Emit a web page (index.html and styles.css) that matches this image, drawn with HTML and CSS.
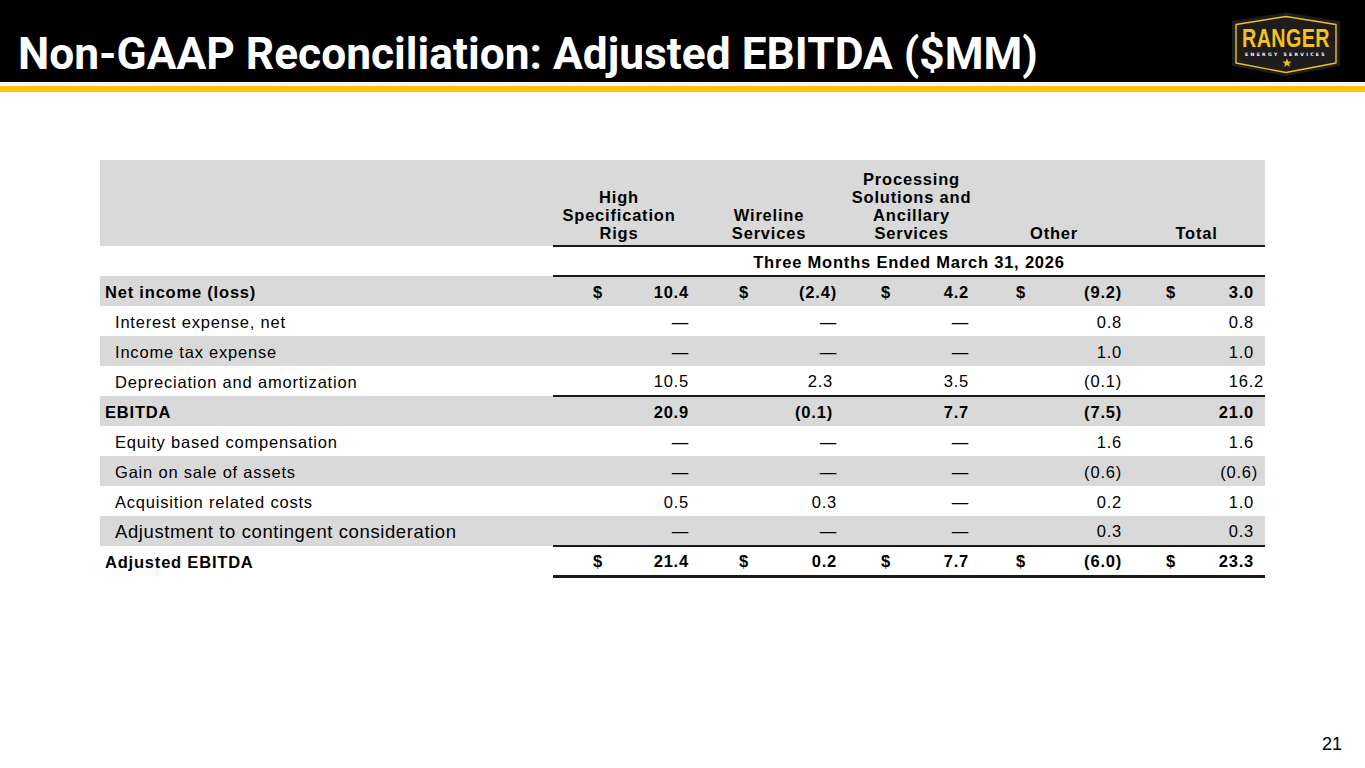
FILE: index.html
```html
<!DOCTYPE html>
<html lang="en">
<head>
<meta charset="utf-8">
<title>Non-GAAP Reconciliation</title>
<link rel="stylesheet" href="styles.css">
</head>
<body>
<div class="page">
  <header class="topbar">
    <h1 class="title">Non-GAAP Reconciliation: Adjusted EBITDA ($MM)</h1>
    <div class="logo">
      <svg width="112" height="65" viewBox="0 0 112 65" xmlns="http://www.w3.org/2000/svg">
        <path d="M3 10 L56 1.5 L109 10 L109 53 L56 63 L3 53 Z" fill="#1e1c1d" stroke="#1e1c1d" stroke-width="2" stroke-linejoin="round"/>
        <path d="M6 12.5 L56 4.5 L106 12.5 L106 51 L56 60.5 L6 51 Z" fill="none" stroke="#f2c01e" stroke-width="1.4" stroke-linejoin="round"/>
        <text x="0" y="0" text-anchor="middle" class="logo-main" transform="translate(56 35) scale(0.76 1)">RANGER</text>
        <text x="56" y="43.5" text-anchor="middle" class="logo-sub">ENERGY SERVICES</text>
        <polygon points="57,46.5 58.2,49.6 61.5,49.7 58.9,51.7 59.8,54.9 57,53 54.2,54.9 55.1,51.7 52.5,49.7 55.8,49.6" fill="#f2c01e"/>
      </svg>
    </div>
  </header>
  <div class="rule-gap"></div>
  <div class="rule"></div>

  <main class="content">
    <table class="recon">
      <colgroup>
        <col class="w-label">
        <col class="w1d"><col class="w1v">
        <col class="w2d"><col class="w2v">
        <col class="w3d"><col class="w3v">
        <col class="w4d"><col class="w4v">
        <col class="w5d"><col class="w5v">
      </colgroup>
      <thead>
        <tr class="hdr">
          <th class="lbl"></th>
          <th colspan="2" class="h h1c">High<br>Specification<br>Rigs</th>
          <th colspan="2" class="h">Wireline<br>Services</th>
          <th colspan="2" class="h">Processing<br>Solutions and<br>Ancillary<br>Services</th>
          <th colspan="2" class="h">Other</th>
          <th colspan="2" class="h">Total</th>
        </tr>
        <tr class="period">
          <th class="lbl"></th>
          <th colspan="10" class="per">Three Months Ended March 31, 2026</th>
        </tr>
      </thead>
      <tbody>
        <tr class="g bold">
          <td class="lbl">Net income (loss)</td>
          <td class="d">$</td><td class="v v1">10.4</td>
          <td class="d">$</td><td class="v v2">(2.4)</td>
          <td class="d">$</td><td class="v v3">4.2</td>
          <td class="d">$</td><td class="v v4">(9.2)</td>
          <td class="d">$</td><td class="v v5">3.0</td>
        </tr>
        <tr>
          <td class="lbl ind">Interest expense, net</td>
          <td></td><td class="v v1">—</td>
          <td></td><td class="v v2">—</td>
          <td></td><td class="v v3">—</td>
          <td></td><td class="v v4">0.8</td>
          <td></td><td class="v v5">0.8</td>
        </tr>
        <tr class="g">
          <td class="lbl ind">Income tax expense</td>
          <td></td><td class="v v1">—</td>
          <td></td><td class="v v2">—</td>
          <td></td><td class="v v3">—</td>
          <td></td><td class="v v4">1.0</td>
          <td></td><td class="v v5">1.0</td>
        </tr>
        <tr class="sub">
          <td class="lbl ind">Depreciation and amortization</td>
          <td></td><td class="v v1">10.5</td>
          <td></td><td class="v v2 nudge">2.3</td>
          <td></td><td class="v v3">3.5</td>
          <td></td><td class="v v4">(0.1)</td>
          <td></td><td class="v v5 wide">16.2</td>
        </tr>
        <tr class="g bold">
          <td class="lbl">EBITDA</td>
          <td></td><td class="v v1">20.9</td>
          <td></td><td class="v v2 nudge">(0.1)</td>
          <td></td><td class="v v3">7.7</td>
          <td></td><td class="v v4">(7.5)</td>
          <td></td><td class="v v5">21.0</td>
        </tr>
        <tr>
          <td class="lbl ind">Equity based compensation</td>
          <td></td><td class="v v1">—</td>
          <td></td><td class="v v2">—</td>
          <td></td><td class="v v3">—</td>
          <td></td><td class="v v4">1.6</td>
          <td></td><td class="v v5">1.6</td>
        </tr>
        <tr class="g">
          <td class="lbl ind">Gain on sale of assets</td>
          <td></td><td class="v v1">—</td>
          <td></td><td class="v v2">—</td>
          <td></td><td class="v v3">—</td>
          <td></td><td class="v v4">(0.6)</td>
          <td></td><td class="v v5 paren">(0.6)</td>
        </tr>
        <tr>
          <td class="lbl ind">Acquisition related costs</td>
          <td></td><td class="v v1">0.5</td>
          <td></td><td class="v v2">0.3</td>
          <td></td><td class="v v3">—</td>
          <td></td><td class="v v4">0.2</td>
          <td></td><td class="v v5">1.0</td>
        </tr>
        <tr class="g sub">
          <td class="lbl ind big">Adjustment to contingent consideration</td>
          <td></td><td class="v v1">—</td>
          <td></td><td class="v v2">—</td>
          <td></td><td class="v v3">—</td>
          <td></td><td class="v v4">0.3</td>
          <td></td><td class="v v5">0.3</td>
        </tr>
        <tr class="bold total">
          <td class="lbl">Adjusted EBITDA</td>
          <td class="d">$</td><td class="v v1">21.4</td>
          <td class="d">$</td><td class="v v2">0.2</td>
          <td class="d">$</td><td class="v v3">7.7</td>
          <td class="d">$</td><td class="v v4">(6.0)</td>
          <td class="d">$</td><td class="v v5">23.3</td>
        </tr>
      </tbody>
    </table>
  </main>

  <footer class="pageno">21</footer>
</div>
</body>
</html>
```

FILE: styles.css
```css
html, body {
  margin: 0;
  padding: 0;
  background: #ffffff;
}

.page {
  width: 1365px;
  height: 768px;
  display: flex;
  flex-direction: column;
  overflow: hidden;
}

.topbar {
  height: 82px;
  background: #000000;
  display: flex;
  justify-content: space-between;
  align-items: flex-end;
  padding: 0 25px 0 18px;
  box-sizing: border-box;
}

.title {
  margin: 0;
  padding-bottom: 6px;
  font-family: "Roboto", "Inter", sans-serif;
  font-weight: 700;
  font-size: 44.3px;
  line-height: 1;
  letter-spacing: 0;
  color: #ffffff;
  white-space: nowrap;
}

.logo {
  align-self: flex-start;
  padding-top: 12px;
  margin-right: -2px;
  height: 65px;
}

.logo svg {
  display: block;
}

.logo-main {
  font-family: "Liberation Sans", Arial, sans-serif;
  font-weight: 700;
  font-size: 26px;
  letter-spacing: 0.5px;
  fill: #f5c21b;
}

.logo-sub {
  font-family: "DejaVu Sans", sans-serif;
  font-weight: 700;
  font-size: 4.6px;
  letter-spacing: 2.3px;
  fill: #ffffff;
}

.rule-gap {
  height: 4px;
  background: #f4f4f4;
}

.rule {
  height: 6px;
  background: #ffc20e;
}

.content {
  flex: 1;
  padding: 68px 0 0 100px;
}

.recon {
  border-collapse: collapse;
  table-layout: fixed;
  width: 1165px;
  font-family: "Liberation Sans", Arial, sans-serif;
  font-size: 16.5px;
  letter-spacing: 0.8px;
  color: #000000;
}

.w-label { width: 453px; }
.w1d { width: 52px; }  .w1v { width: 90px; }
.w2d { width: 56px; }  .w2v { width: 92px; }
.w3d { width: 50px; }  .w3v { width: 87px; }
.w4d { width: 48px; }  .w4v { width: 100px; }
.w5d { width: 50px; }  .w5v { width: 87px; }

.recon th,
.recon td {
  padding: 0;
  white-space: nowrap;
}

.hdr {
  background: #d9d9d9;
  height: 86px;
}

.hdr .h {
  vertical-align: bottom;
  text-align: center;
  font-weight: 700;
  line-height: 18px;
  padding-bottom: 3px;
  border-bottom: 2px solid #1a1a1a;
}

.hdr .h1c {
  padding-right: 10px;
}

.period {
  height: 30px;
}

.per {
  text-align: center;
  font-weight: 700;
  padding-top: 2px !important;
  border-bottom: 2px solid #1a1a1a;
}

.recon tbody tr {
  height: 30px;
}

.recon tbody td {
  padding-top: 2px;
}

.recon tbody tr.g {
  background: #d9d9d9;
}

.recon td.lbl {
  padding-left: 5px;
}

.recon td.ind {
  padding-left: 15px;
}

.recon td.big {
  font-size: 18.5px;
  letter-spacing: 0.6px;
}

.bold td {
  font-weight: 700;
}

.d {
  text-align: right;
  padding-right: 2px !important;
}

.v {
  text-align: right;
}

.v1 { padding-right: 6px !important; }
.v2 { padding-right: 6px !important; }
.v3 { padding-right: 11px !important; }
.v4 { padding-right: 6px !important; }
.v5 { padding-right: 11px !important; }

.v5.wide { padding-right: 1px !important; }
.v5.paren { padding-right: 7px !important; }
.v2.nudge { padding-right: 10px !important; }

.sub td:not(.lbl) {
  border-bottom: 2px solid #1a1a1a;
}

.total td:not(.lbl) {
  border-bottom: 3px solid #1a1a1a;
}

.pageno {
  text-align: right;
  padding: 0 23px 15px 0;
  font-family: "Liberation Sans", Arial, sans-serif;
  font-size: 18px;
  line-height: 18px;
  color: #000000;
}
```
